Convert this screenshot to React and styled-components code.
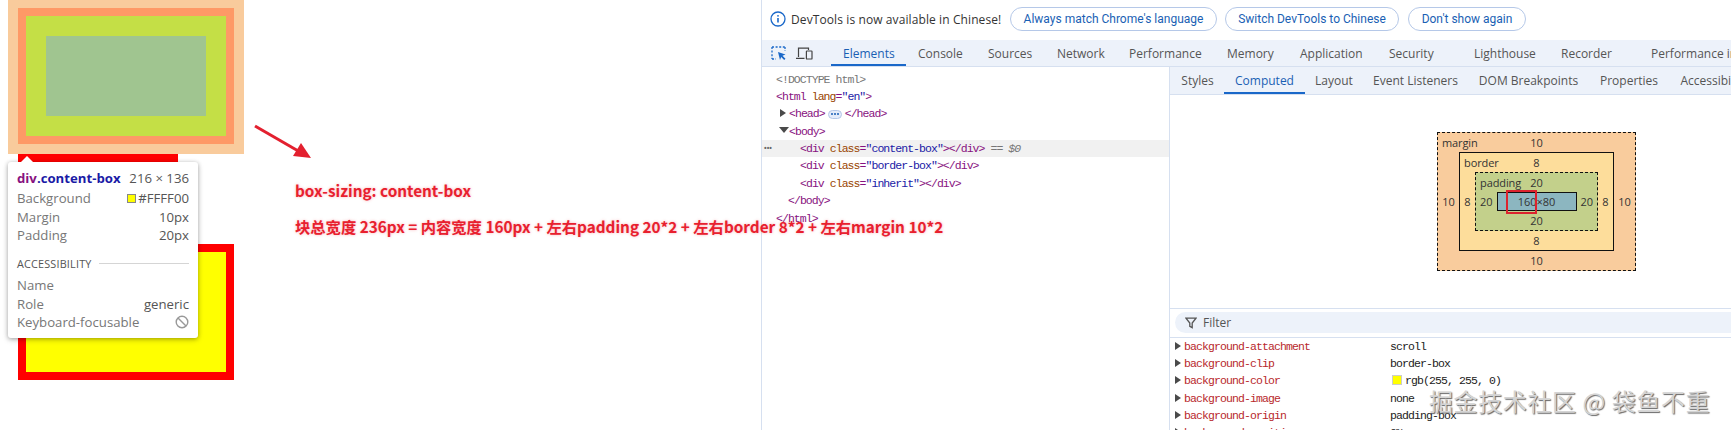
import React from "react";
import styled, { createGlobalStyle } from "styled-components";

const GlobalStyle = createGlobalStyle`
  html, body {
    margin: 0;
    padding: 0;
    background: #ffffff;
    overflow: hidden;
  }
  * {
    box-sizing: border-box;
  }
`;

const UI_FONT = `"Open Sans", "Noto Sans", sans-serif`;
const CODE_FONT = `"Liberation Mono", monospace`;
const NOTE_FONT = `"Noto Sans CJK SC", "Noto Sans", sans-serif`;

const Screen = styled.div`
  position: relative;
  display: flex;
  width: 1731px;
  height: 430px;
  overflow: hidden;
  font-family: ${UI_FONT};
`;

/* page under inspection */
const Page = styled.div`
  position: relative;
  width: 761px;
  flex-shrink: 0;
  padding-left: 8px;
`;

const HighlightMargin = styled.div`
  width: 236px;
  height: 154px;
  padding: 8px 10px 10px;
  background: #f9cb9c;
`;

const HighlightBorder = styled.div`
  height: 100%;
  padding: 8px;
  background: #fe9966;
`;

const HighlightPadding = styled.div`
  height: 100%;
  padding: 20px;
  background: #c4df46;
`;

const HighlightContent = styled.div`
  height: 100%;
  background: #a0c590;
`;

const YellowBlock = styled.div`
  width: ${(p) => p.$width}px;
  height: ${(p) => p.$height}px;
  margin: ${(p) => p.$top}px 0 0 10px;
  background: #ffff00;
  border: 8px solid #ff0000;
`;

const Tooltip = styled.div`
  position: absolute;
  left: 8px;
  top: 162px;
  width: 190px;
  height: 176px;
  padding: 4px 9px 0;
  background: #ffffff;
  border-radius: 3px;
  box-shadow: 0 1px 4px rgba(0, 0, 0, 0.3), 0 2px 7px rgba(0, 0, 0, 0.12);
  font-size: 13.2px;
  color: #777777;

  &::before {
    content: "";
    position: absolute;
    left: 13px;
    top: -6px;
    border-left: 6px solid transparent;
    border-right: 6px solid transparent;
    border-bottom: 6px solid #ffffff;
  }
`;

const TipRow = styled.div`
  display: flex;
  justify-content: space-between;
  align-items: center;
  height: ${(p) => p.$height || 18.5}px;
  white-space: nowrap;
`;

const TipTitle = styled.span`
  font-size: 13.2px;
  font-weight: 700;
  color: #1a1aa6;

  & > em {
    font-style: normal;
    color: #881280;
  }
`;

const TipValue = styled.span`
  display: flex;
  align-items: center;
  gap: 2px;
  color: #555555;
`;

const TipSwatch = styled.span`
  width: 9px;
  height: 9px;
  background: #ffff00;
  border: 1px solid #888888;
`;

const TipSection = styled.div`
  display: flex;
  align-items: center;
  gap: 7px;
  height: 20px;
  margin: 8.5px 0 3px;
  font-size: 10.8px;
  letter-spacing: 0.2px;
  color: #555555;

  &::after {
    content: "";
    flex: 1;
    height: 1px;
    background: #d5d5d5;
  }
`;

const Arrow = styled.svg`
  position: absolute;
  left: 250px;
  top: 120px;
`;

const Note = styled.div`
  position: absolute;
  left: 295px;
  top: ${(p) => p.$top}px;
  font-family: ${NOTE_FONT};
  font-size: 15.3px;
  line-height: 18px;
  font-weight: 700;
  white-space: nowrap;
  color: #e8202e;
  text-shadow: 0 0 3px rgba(232, 32, 46, 0.35);
`;

/* devtools */
const DevTools = styled.div`
  flex: 1;
  min-width: 0;
  display: flex;
  flex-direction: column;
  border-left: 1px solid #d6e0f0;
`;

const InfoBar = styled.div`
  display: flex;
  align-items: center;
  height: 40px;
  padding: 0 0 2px 8px;
  font-size: 12px;
  color: #333333;
  white-space: nowrap;
`;

const InfoText = styled.span`
  width: 219px;
  margin-left: 5px;
  letter-spacing: 0.1px;
`;

const PillButton = styled.button`
  width: ${(p) => p.$width}px;
  height: 24px;
  margin-right: ${(p) => p.$gap}px;
  padding: 0;
  background: #ffffff;
  border: 1px solid #b5c8e8;
  border-radius: 12px;
  font-family: "Roboto", "Liberation Sans", sans-serif;
  font-size: 12px;
  color: #1a5fb4;
`;

const MainTabs = styled.div`
  display: flex;
  align-items: stretch;
  height: 27px;
  background: #edf2fa;
  border-bottom: 1px solid #d6e0f0;
  white-space: nowrap;
`;

const ToolIcons = styled.div`
  display: flex;
  align-items: center;
  gap: 9px;
  width: 69px;
  padding-left: 9px;
  flex-shrink: 0;
`;

const Tab = styled.div`
  display: flex;
  align-items: center;
  justify-content: ${(p) => (p.$side ? "center" : "flex-start")};
  width: ${(p) => p.$width}px;
  flex-shrink: 0;
  padding-left: ${(p) => (p.$side ? 0 : 12)}px;
  font-size: 12px;
  color: ${(p) => (p.$active ? "#1a5fb4" : "#555555")};
  box-shadow: ${(p) => (p.$active ? "inset 0 -2px 0 #1a68c9" : "none")};
`;

const Panels = styled.div`
  flex: 1;
  min-height: 0;
  display: flex;
`;

const ElementsPanel = styled.div`
  width: 408px;
  flex-shrink: 0;
  padding-top: 3.5px;
  border-right: 1px solid #d6e0f0;
  font-family: ${CODE_FONT};
  font-size: 11.5px;
  letter-spacing: -0.95px;
`;

const DomRow = styled.div`
  position: relative;
  height: 17.4px;
  line-height: 17.4px;
  padding-left: ${(p) => p.$indent}px;
  white-space: nowrap;
  color: #881280;
  background: ${(p) => (p.$selected ? "#f1f1f1" : "transparent")};
`;

const Attr = styled.span`
  color: #994500;
`;

const Val = styled.span`
  color: #1a1aa6;
`;

const Gray = styled.span`
  color: #777777;
`;

const Marker = styled.span`
  position: absolute;
  left: ${(p) => p.$left}px;
  top: 4px;
  width: 0;
  height: 0;
  border-style: solid;
  border-color: transparent;
  ${(p) =>
    p.$open
      ? "border-width: 6px 5px 0; border-top-color: #4a4a4a;"
      : "border-width: 4.5px 0 4.5px 6px; border-left-color: #4a4a4a;"}
`;

const Ellipsis = styled.span`
  display: inline-flex;
  align-items: center;
  justify-content: center;
  width: 14px;
  height: 9px;
  margin: 0 3px;
  background: #e4ecfa;
  border: 1px solid #b5c8e8;
  border-radius: 5px;
  vertical-align: middle;

  &::before {
    content: "";
    width: 2px;
    height: 2px;
    border-radius: 50%;
    background: #1a5fb4;
    box-shadow: -3px 0 0 #1a5fb4, 3px 0 0 #1a5fb4;
  }
`;

const DotsMark = styled.span`
  position: absolute;
  left: 2px;
  top: 0;
  font-family: ${UI_FONT};
  font-size: 7px;
  letter-spacing: 0;
  font-weight: 700;
  color: #666666;
`;

const SidePanel = styled.div`
  flex: 1;
  min-width: 0;
  display: flex;
  flex-direction: column;
  overflow: hidden;
`;

const SideTabs = styled.div`
  display: flex;
  height: 28px;
  padding-left: 1px;
  flex-shrink: 0;
  background: #edf2fa;
  border-bottom: 1px solid #d6e0f0;
  white-space: nowrap;
`;

const ModelArea = styled.div`
  flex-shrink: 0;
  height: 214px;
  padding: 37px 0 0 267px;
  border-bottom: 1px solid #d6e0f0;
`;

const ModelBox = styled.div`
  position: relative;
  display: grid;
  grid-template-columns: ${(p) => p.$side}px 1fr ${(p) => p.$side}px;
  grid-template-rows: 19px auto 19px;
  align-items: center;
  width: ${(p) => p.$width}px;
  font-size: 11px;
  line-height: 19px;
  text-align: center;
  color: #333333;
  background: ${(p) => p.$bg};
  border: 1px ${(p) => p.$line} #111111;
`;

const ModelLabel = styled.span`
  position: absolute;
  left: 4px;
  top: 0;
  letter-spacing: -0.1px;
`;

const ModelCell = styled.span`
  grid-column: ${(p) => p.$col};
`;

const ModelContent = styled.div`
  position: relative;
  height: 19px;
  line-height: 17px;
  font-size: 11px;
  text-align: center;
  color: #333333;
  background: #8cb6c0;
  border: 1px solid #111111;
`;

const RedMark = styled.div`
  position: absolute;
  left: 8px;
  top: -3px;
  width: 31px;
  height: 24px;
  border: 2px solid #dc232e;
`;

const FilterRow = styled.div`
  flex-shrink: 0;
  height: 29px;
  padding: 3px 0 4px 5px;
  border-bottom: 1px solid #d6e0f0;
`;

const FilterInput = styled.div`
  display: flex;
  align-items: center;
  gap: 6px;
  height: 21px;
  padding-left: 10px;
  font-size: 12px;
  color: #555555;
  background: #edf2fa;
  border-radius: 11px 0 0 11px;
`;

const PropRow = styled.div`
  position: relative;
  display: flex;
  flex-shrink: 0;
  height: 17.2px;
  line-height: 17.2px;
  padding-left: 14px;
  font-family: ${CODE_FONT};
  font-size: 11.5px;
  letter-spacing: -0.9px;
  white-space: nowrap;
  color: #222222;
`;

const PropName = styled.span`
  width: 206px;
  color: #b8282c;
`;

const PropSwatch = styled.span`
  display: inline-block;
  width: 10px;
  height: 10px;
  margin: 0 3px 0 2px;
  background: #ffff00;
  border: 1px solid #cccccc;
  vertical-align: -1px;
`;

const Watermark = styled.div`
  position: absolute;
  left: 1429px;
  top: 384px;
  font-family: ${NOTE_FONT};
  font-size: 24px;
  line-height: 34px;
  letter-spacing: 0.6px;
  white-space: nowrap;
  color: #d4d4d4;
  text-shadow: 1px 1px 1px #666666, -1px -1px 0 rgba(255, 255, 255, 0.7);
`;

const mainTabs = [
  ["Elements", 75, true],
  ["Console", 70],
  ["Sources", 69],
  ["Network", 72],
  ["Performance", 98],
  ["Memory", 73],
  ["Application", 89],
  ["Security", 85],
  ["Lighthouse", 87],
  ["Recorder", 90],
  ["Performance insights", 150],
];

const sideTabs = [
  ["Styles", 53],
  ["Computed", 81, true],
  ["Layout", 58],
  ["Event Listeners", 105],
  ["DOM Breakpoints", 121],
  ["Properties", 80],
  ["Accessibility", 90],
];

const props = [
  ["background-attachment", "scroll"],
  ["background-clip", "border-box"],
  ["background-color", "rgb(255, 255, 0)", true],
  ["background-image", "none"],
  ["background-origin", "padding-box"],
  ["background-position-x", "0%"],
];

function InfoIcon() {
  return (
    <svg width="16" height="16" viewBox="0 0 16 16" fill="none" stroke="#1a68c9" strokeWidth="1.3">
      <circle cx="8" cy="8" r="7" />
      <path d="M8 7v4.6" strokeWidth="1.6" />
      <circle cx="8" cy="4.8" r="0.9" fill="#1a68c9" stroke="none" />
    </svg>
  );
}

function InspectIcon() {
  return (
    <svg width="16" height="15" viewBox="0 0 16 15" fill="none">
      <path d="M1 1h13M1 1v12M1 13h4" stroke="#1a68c9" strokeWidth="1.3" strokeDasharray="2 1.6" />
      <path d="M14 1v4" stroke="#1a68c9" strokeWidth="1.3" strokeDasharray="2 1.6" />
      <path d="M7 6l7.5 2.6-3 1.2 3 3-1.3 1.3-3-3-1.2 3z" fill="#1a68c9" />
    </svg>
  );
}

function DeviceIcon() {
  return (
    <svg width="17" height="13" viewBox="0 0 17 13" fill="none" stroke="#444444" strokeWidth="1.2">
      <path d="M2.5 10V1.2h10V3M0 11.4h8.5" />
      <rect x="10.4" y="4" width="5.6" height="8" rx="0.6" />
    </svg>
  );
}

function FilterIcon() {
  return (
    <svg width="12" height="12" viewBox="0 0 12 12" fill="none" stroke="#555555" strokeWidth="1.3">
      <path d="M1 1.2h10L7.2 6v4.6L4.8 9.4V6z" />
    </svg>
  );
}

function BlockedIcon() {
  return (
    <svg width="14" height="14" viewBox="0 0 14 14" fill="none" stroke="#999999" strokeWidth="1.4">
      <circle cx="7" cy="7" r="5.8" />
      <path d="M3 3l8 8" />
    </svg>
  );
}

function BoxModel() {
  return (
    <ModelBox $width={199} $side={21} $bg="#f9cc9d" $line="dashed">
      <ModelLabel>margin</ModelLabel>
      <ModelCell $col="2">10</ModelCell>
      <ModelCell $col="1">10</ModelCell>
      <ModelBox $width={155} $side={15} $bg="#fddd9b" $line="solid">
        <ModelLabel>border</ModelLabel>
        <ModelCell $col="2">8</ModelCell>
        <ModelCell $col="1">8</ModelCell>
        <ModelBox $width={123} $side={20.5} $bg="#c3d08b" $line="dashed">
          <ModelLabel>padding</ModelLabel>
          <ModelCell $col="2">20</ModelCell>
          <ModelCell $col="1">20</ModelCell>
          <ModelContent>
            160×80
            <RedMark />
          </ModelContent>
          <ModelCell $col="3">20</ModelCell>
          <ModelCell $col="2">20</ModelCell>
        </ModelBox>
        <ModelCell $col="3">8</ModelCell>
        <ModelCell $col="2">8</ModelCell>
      </ModelBox>
      <ModelCell $col="3">10</ModelCell>
      <ModelCell $col="2">10</ModelCell>
    </ModelBox>
  );
}

export default function App() {
  return (
    <Screen>
      <GlobalStyle />
      <Page>
        <HighlightMargin>
          <HighlightBorder>
            <HighlightPadding>
              <HighlightContent />
            </HighlightPadding>
          </HighlightBorder>
        </HighlightMargin>
        <YellowBlock $width={160} $height={80} $top={0} />
        <YellowBlock $width={216} $height={136} $top={10} />

        <Tooltip>
          <TipRow $height={23}>
            <TipTitle><em>div</em>.content-box</TipTitle>
            <TipValue>216 × 136</TipValue>
          </TipRow>
          <TipRow>
            Background
            <TipValue><TipSwatch />#FFFF00</TipValue>
          </TipRow>
          <TipRow>Margin<TipValue>10px</TipValue></TipRow>
          <TipRow>Padding<TipValue>20px</TipValue></TipRow>
          <TipSection>ACCESSIBILITY</TipSection>
          <TipRow>Name</TipRow>
          <TipRow>Role<TipValue>generic</TipValue></TipRow>
          <TipRow>Keyboard-focusable<BlockedIcon /></TipRow>
        </Tooltip>

        <Arrow width="64" height="42" viewBox="0 0 64 42" fill="none">
          <path d="M5 6L50 32" stroke="#e3202f" strokeWidth="3" />
          <path d="M61 38L43 36L51 23z" fill="#e3202f" />
        </Arrow>
      </Page>

      <DevTools>
        <InfoBar>
          <InfoIcon />
          <InfoText>DevTools is now available in Chinese!</InfoText>
          <PillButton $width={207} $gap={8}>Always match Chrome's language</PillButton>
          <PillButton $width={174} $gap={9}>Switch DevTools to Chinese</PillButton>
          <PillButton $width={118} $gap={0}>Don't show again</PillButton>
        </InfoBar>

        <MainTabs>
          <ToolIcons>
            <InspectIcon />
            <DeviceIcon />
          </ToolIcons>
          {mainTabs.map(([name, width, active]) => (
            <Tab key={name} $width={width} $active={active}>{name}</Tab>
          ))}
        </MainTabs>

        <Panels>
          <ElementsPanel>
            <DomRow $indent={14}><Gray>&lt;!DOCTYPE html&gt;</Gray></DomRow>
            <DomRow $indent={14}>&lt;html <Attr>lang</Attr>=<Val>"en"</Val>&gt;</DomRow>
            <DomRow $indent={27}><Marker $left={18} />&lt;head&gt;<Ellipsis />&lt;/head&gt;</DomRow>
            <DomRow $indent={27}><Marker $left={17} $open />&lt;body&gt;</DomRow>
            <DomRow $indent={38} $selected>
              <DotsMark>•••</DotsMark>
              &lt;div <Attr>class</Attr>=<Val>"content-box"</Val>&gt;&lt;/div&gt; <Gray><i>== $0</i></Gray>
            </DomRow>
            <DomRow $indent={38}>&lt;div <Attr>class</Attr>=<Val>"border-box"</Val>&gt;&lt;/div&gt;</DomRow>
            <DomRow $indent={38}>&lt;div <Attr>class</Attr>=<Val>"inherit"</Val>&gt;&lt;/div&gt;</DomRow>
            <DomRow $indent={26}>&lt;/body&gt;</DomRow>
            <DomRow $indent={14}>&lt;/html&gt;</DomRow>
          </ElementsPanel>

          <SidePanel>
            <SideTabs>
              {sideTabs.map(([name, width, active]) => (
                <Tab key={name} $side $width={width} $active={active}>{name}</Tab>
              ))}
            </SideTabs>
            <ModelArea>
              <BoxModel />
            </ModelArea>
            <FilterRow>
              <FilterInput><FilterIcon />Filter</FilterInput>
            </FilterRow>
            {props.map(([name, value, swatch]) => (
              <PropRow key={name}>
                <Marker $left={5} />
                <PropName>{name}</PropName>
                <span>{swatch && <PropSwatch />}{value}</span>
              </PropRow>
            ))}
          </SidePanel>
        </Panels>
      </DevTools>

      <Note $top={181}>box-sizing: content-box</Note>
      <Note $top={217}>块总宽度 236px = 内容宽度 160px + 左右padding 20*2 + 左右border 8*2 + 左右margin 10*2</Note>
      <Watermark>掘金技术社区 @ 袋鱼不重</Watermark>
    </Screen>
  );
}
